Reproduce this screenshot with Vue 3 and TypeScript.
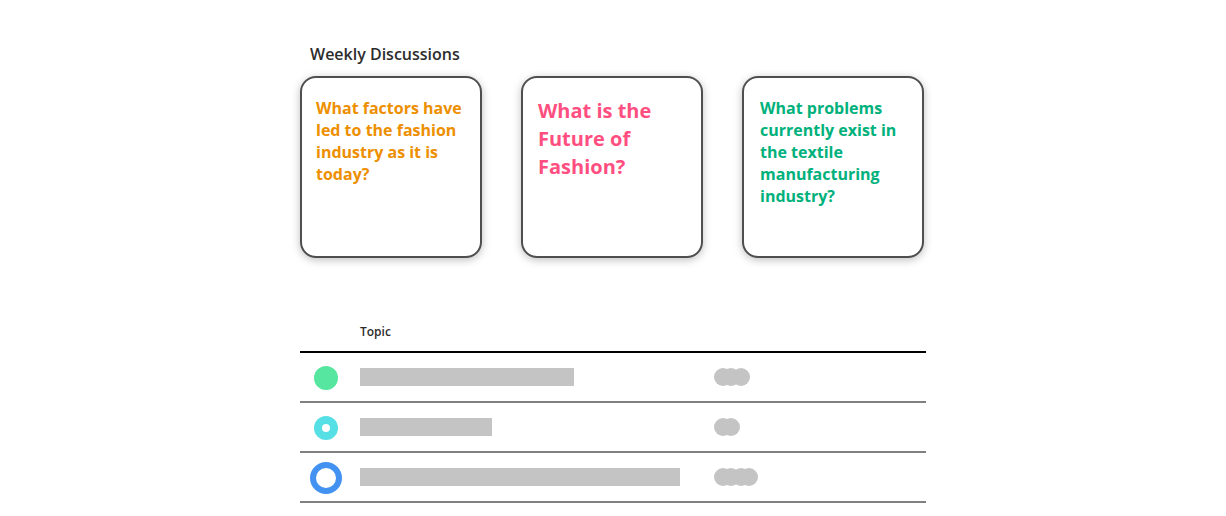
<script setup lang="ts">
interface Discussion {
  question: string
  tone: 'amber' | 'pink' | 'green'
}

interface Topic {
  id: number
  status: 'solid' | 'dot' | 'ring'
  length: number
  members: number[]
}

const discussions: Discussion[] = [
  { question: 'What factors have led to the fashion industry as it is today?', tone: 'amber' },
  { question: 'What is the Future of Fashion?', tone: 'pink' },
  { question: 'What problems currently exist in the textile manufacturing industry?', tone: 'green' },
]

// members holds the horizontal centre of each overlapping avatar
const topics: Topic[] = [
  { id: 1, status: 'solid', length: 214, members: [9, 17, 27] },
  { id: 2, status: 'dot', length: 132, members: [9, 17] },
  { id: 3, status: 'ring', length: 320, members: [9, 17, 27, 35] },
]
</script>

<template>
  <main class="page">
    <section>
      <h1 class="title">Weekly Discussions</h1>
      <div class="cards">
        <article v-for="d in discussions" :key="d.tone" class="card" :class="d.tone">
          <p class="question">{{ d.question }}</p>
        </article>
      </div>
    </section>

    <table class="topics">
      <colgroup>
        <col class="col-status" />
        <col class="col-topic" />
        <col />
      </colgroup>
      <thead>
        <tr>
          <th aria-label="Status"></th>
          <th scope="col">Topic</th>
          <th aria-label="Members"></th>
        </tr>
      </thead>
      <tbody>
        <tr v-for="t in topics" :key="t.id">
          <td class="status-cell"><span class="status" :class="t.status"></span></td>
          <td><div class="bar" :style="{ width: t.length + 'px' }"></div></td>
          <td>
            <svg class="members" width="44" height="18" viewBox="0 0 44 18" aria-hidden="true">
              <circle v-for="cx in t.members" :key="cx" :cx="cx" cy="9" r="9" />
            </svg>
          </td>
        </tr>
      </tbody>
    </table>
  </main>
</template>

<style>
body {
  margin: 0;
  background: #fff;
}
</style>

<style scoped>
.page {
  box-sizing: border-box;
  max-width: 626px;
  margin: 0 auto;
  padding-top: 43px;
  font-family: "Open Sans", "Noto Sans", sans-serif;
  color: #2c2c2c;
}

.title {
  margin: 0 10px 11px;
  font-size: 16px;
  font-weight: 600;
  line-height: 22px;
}

.cards {
  display: grid;
  grid-template-columns: repeat(3, 1fr);
  gap: 39px;
  margin-right: 2px;
}

.card {
  box-sizing: border-box;
  min-height: 182px;
  padding: 19px 14px;
  border: 2px solid #4f4f4f;
  border-radius: 16px;
  background: #fff;
  box-shadow: 0 2px 8px rgba(0, 0, 0, 0.25);
}

.question {
  margin: 0;
  font-size: 16px;
  font-weight: 700;
  line-height: 22px;
}

.amber {
  color: #ed8f00;
}

.pink {
  padding-left: 15px;
  color: #ff4f81;
}

.pink .question {
  font-size: 20px;
  line-height: 28px;
}

.green {
  padding-left: 16px;
  color: #00b17c;
}

.topics {
  width: 100%;
  margin-top: 53px;
  border-spacing: 0;
  table-layout: fixed;
}

.col-status {
  width: 60px;
}

.col-topic {
  width: 354px;
}

th {
  box-sizing: border-box;
  height: 42px;
  padding: 2px 0 0;
  border-bottom: 2px solid #000;
  font-size: 12px;
  font-weight: 600;
  line-height: 18px;
  text-align: left;
}

td {
  box-sizing: border-box;
  height: 50px;
  padding: 0;
  border-bottom: 2px solid #808080;
  vertical-align: middle;
}

.status-cell {
  padding: 2px 8px 0 0;
}

.status {
  display: block;
  box-sizing: border-box;
  width: 24px;
  height: 24px;
  margin: 0 auto;
  border-radius: 50%;
}

.solid {
  background: #57e69f;
}

.dot {
  border: 8px solid #56dfe5;
}

.ring {
  width: 32px;
  height: 32px;
  border: 6px solid #4392f1;
}

.bar {
  height: 18px;
  background: #c4c4c4;
}

.members {
  display: block;
  fill: #c4c4c4;
}
</style>
